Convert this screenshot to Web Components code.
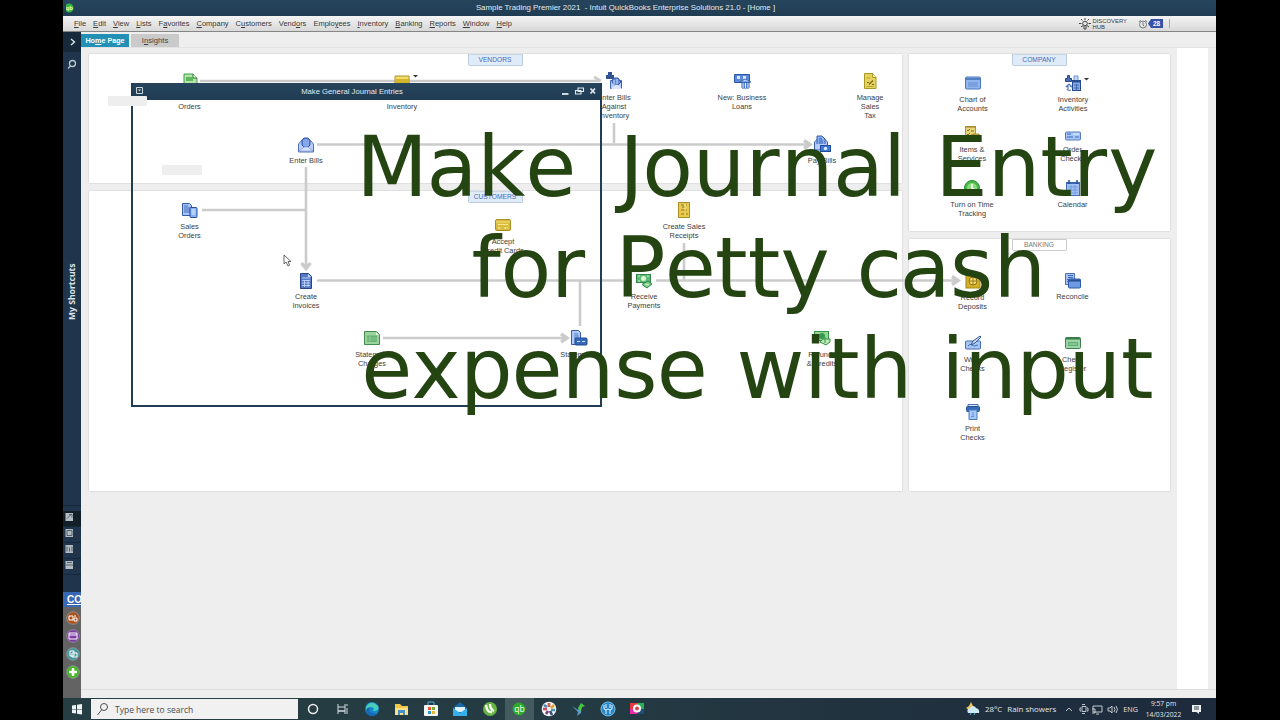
<!DOCTYPE html>
<html lang="en">
<head>
<meta charset="utf-8">
<title>QuickBooks Home</title>
<style>
  body {
    margin: 0;
    background: #000;
    font-family: "Liberation Sans", Arial, sans-serif;
    overflow: hidden;
  }
</style>
</head>
<body>
<qb-desktop></qb-desktop>

<script>
const ICONS = {
  po: '<path d="M3 3h9l4 4v10H3z" fill="#b5e5a8" stroke="#3e9d45"/><path d="M12 3v4h4" fill="#e5f8df" stroke="#2d7738"/><path d="M5 6h7v4H5z" fill="#60b75b"/>',
  box: '<path d="M2 5h14v10H2z" fill="#f2dd66" stroke="#a8932f"/><path d="M2 8h15v4H2z" fill="#d0b52d"/>',
  bills: '<path d="M1.500 8 5 4h8l3.500 4v8h-15z" fill="#b9ceff" stroke="#5270b6"/><path d="M5 9V4l2-2h4l2 2v5l-4 4z" fill="#6389d6" stroke="#3558a7"/><path d="M7 4v6M9 3v9M11 4v6" stroke="#a9c6fc"/><path d="m2 15 5-4h4l5 4z" fill="#d4e1ff" stroke="#7590cb" stroke-width=".6"/>',
  against: '<g transform="translate(1 1)"><path d="M4.500 7.500h11v8h-11z" fill="#b9ceff" stroke="#4265b1"/><path d="M6 9 7 5h5l3 4-5 5z" fill="#6389d6" stroke="#3558a7"/><path d="m5 16 4-4h3l4 4" fill="#dbe5ff"/><path d="M8 7v5M11 6v5" stroke="#d2e0ff"/></g><path d="M1 3h2V0h4v3h2v4H1z" fill="#325494"/>',
  loan: '<path d="M1.500 2.500h15v8h-15z" fill="#5a88db" stroke="#2c56a1"/><path d="M4 4h3v3H4M10 4h3v3h-3" fill="#d8e8ff"/><path d="M9 10h7v6H9z" fill="#5781d1" stroke="#2c56a1"/><path d="m7 10 5-3 6 3z" fill="#b6d0ff" stroke="#2c56a1" stroke-width=".7"/><path d="M10 11v5M12.500 11v5M15 11v5" stroke="#dce9ff"/>',
  tax: '<path d="M3.500 1.500h8l3.500 4v11H3.500z" fill="#e6d35e" stroke="#a99826"/><path d="M11.500 1.500v4H15" fill="#fff2a2" stroke="#a99826"/><path d="M5.500 6h4M5.500 14.500h7" stroke="#b7a53b"/><path d="m8 12.500 4-4m-6 2h2m3 2h2" stroke="#79671c" stroke-width="1.200"/>',
  salesorder: '<path d="M1.500 2.500h7l2 2v10h-9z" fill="#a5c5ff" stroke="#345ba8"/><path d="M3 5h4M3 7h6M3 9h6M3 11h6" stroke="#456ab4"/><rect x="9" y="6.500" width="7" height="10" rx="1" fill="#81b1ff" stroke="#294d97"/><path d="M10.500 8h4v6h-4z" fill="#b6d1ff"/>',
  invoice: '<path d="M3.500 1.500h8l3 3v12h-11z" fill="#5679c5" stroke="#25468e"/><path d="M11 2v3h3" fill="#d3e2ff"/><path d="M5 6h8M5 8.500h8M5 11h8M5 13.500h8M7.500 8v7M11 8v7" stroke="#bed5ff" stroke-width=".9"/>',
  card: '<rect x="1.500" y="3.500" width="15" height="11" rx="1.500" fill="#d8bd3c" stroke="#a99025"/><path d="M2 6h14" stroke="#f4e078"/><path d="M4 8.500h10M4 12h3M10 12h4" stroke="#fff4af" stroke-width="1.200" stroke-dasharray="2 .6"/>',
  receipt: '<path d="M3.500 1.500h11v15h-11z" fill="#e7cb4f" stroke="#aa8c22"/><path d="M6 4h3M7 6h3M6 9h6M6 13h3M11 4h1M11 13h2" stroke="#91751f"/><path d="M10 3v7" stroke="#f9e998"/>',
  money: '<rect x="1.500" y="2.500" width="14" height="8" fill="#5dba73" stroke="#2e854b"/><circle cx="8.500" cy="6.500" r="2.500" fill="#dff7d7"/><path d="M3 4h2M12 4h2M3 9h2" stroke="#d3f4d2"/><path d="M7 12.500 13 9l4 3-5 4z" fill="#7bce83" stroke="#31864c"/><path d="m10 12 4 1" stroke="#d7f5d5"/>',
  refund: '<rect x="1.500" y="2.500" width="14" height="9" fill="#94d591" stroke="#369149"/><circle cx="9" cy="7" r="3" fill="#389750"/><path d="M7 13l3-3h7v3l-4 3z" fill="#bde9b5" stroke="#348e47"/><path d="M12 8v6" stroke="#37954c"/>',
  statecharge: '<path d="M1.500 2.500h12l3 3v10h-15z" fill="#9bd39c" stroke="#418c4b"/><path d="M13 3v3h3" fill="#e5f9dc"/><path d="M4 6.500h10V13H4z" fill="#65af72"/><path d="M4 9h10M4 11h10M7 7v6" stroke="#a0d69f" stroke-width=".6"/>',
  statement: '<path d="M1.500 1.500h7l2 2v12h-9z" fill="#aecaff" stroke="#355bad"/><path d="M4 5h4M4 7h5M4 9h4" stroke="#517ac9"/><rect x="5" y="9" width="12" height="7" rx="1" fill="#3569bc" stroke="#234b91"/><path d="M7 12.500h3M12 12.500h3" stroke="#cfe0ff"/>',
  paybill: '<path d="m1.500 7 3-3h7l3 3v8h-13z" fill="#b4ccff" stroke="#375eae"/><path d="M4 9V1h5l3 3v5" fill="#88aff2" stroke="#375eae"/><path d="M6 4h3M6 6h4M6 8h4" stroke="#375eae"/><rect x="7.500" y="10.500" width="10" height="6" fill="#3e78d0" stroke="#244b96"/><circle cx="12.500" cy="13.500" r="1.700" fill="#dce9ff"/>',
  accounts: '<rect x="1.500" y="3" width="15" height="12" rx="1" fill="#91b5ed" stroke="#4c78bd"/><path d="M2 5h14" stroke="#416cb3" stroke-width="1.500"/><path d="M4 8h10v5H4z" fill="#5783ce"/><path d="M5 8v5M7 8v5M9 8v5M11 8v5M13 8v5" stroke="#c2d8ff" stroke-width=".7"/>',
  activities: '<path d="M3.500 1.500h2v3h2v3h-6v-3h2z" fill="#4d70b2" stroke="#274887"/><path d="M3 15q1 2 4 1M4 15v-3l-2 1 3-3 3 3-2-1" fill="none" stroke="#5177bd" stroke-width="1.200"/><path d="M10 6V2h4v4" fill="#c3d8ff" stroke="#6f94cd"/><rect x="8.500" y="6.500" width="8" height="10" fill="#8aabe1" stroke="#264b8d"/><path d="M8 7.500h9" stroke="#294d91" stroke-width="2"/><path d="M10 11h5M10 14h5M12.500 10v6" stroke="#3f69ae"/>',
  items: '<path d="M2.500 2.500h10v12h-10z" fill="#e6d478" stroke="#b3983a"/><path d="M2 3h11" stroke="#977c23"/><path d="m4 6 1 1 2-2M4 10l1 1 2-2M8 7h3M8 11h3" fill="none" stroke="#816d27"/><path d="M10 10h6l1 3-4 3H9z" fill="#d9b73f" stroke="#a98927"/>',
  check: '<rect x="1.500" y="5" width="15" height="8" rx="1" fill="#a7c5fa" stroke="#577dbc"/><path d="M3 7h4M3 10h6M11 10h4" stroke="#3d68b2"/><path d="M9 7h6" stroke="#e8f1ff"/>',
  clock: '<circle cx="9" cy="9" r="7.500" fill="#4ab64b" stroke="#219232"/><circle cx="9" cy="9" r="5" fill="#89da7b"/><path d="M9 5v4l3 2" fill="none" stroke="#fff" stroke-width="1.500"/>',
  calendar: '<rect x="2.500" y="3.500" width="13" height="13" fill="#a1c1f5" stroke="#416eb4"/><path d="M2 4h14" stroke="#3867b1" stroke-width="2"/><path d="M5 1v4M13 1v4" stroke="#274f95" stroke-width="1.500"/><path d="M4 8h10M4 11h10M4 14h10M7 6v9M11 6v9" stroke="#6a94da" stroke-width=".8"/>',
  safe: '<rect x="2" y="2" width="14" height="14" fill="#d2b129" stroke="#a88413"/><circle cx="9" cy="9" r="4" fill="#f4db70" stroke="#8f7215"/><path d="M9 5v8M5 9h8" stroke="#9c7b17"/>',
  reconcile: '<path d="M1.500 1.500h9v11h-9z" fill="#a6c3f4" stroke="#4870b5"/><path d="M4 3.500h5M4 5.500h5M3 7.500h2M3 9.500h2" stroke="#3f69b0"/><rect x="4.500" y="7" width="12" height="9" rx="1" fill="#6d9ae2" stroke="#305aa7"/><path d="M5 8.500h11" stroke="#284d91" stroke-width="2"/>',
  write: '<rect x="1.500" y="7" width="15" height="8" rx="1" fill="#a7c6f9" stroke="#446db0"/><path d="M4 12q2-3 4-1t6 0" fill="none" stroke="#4670b8"/><path d="m7 11 2-4 7-5 1 1-6 6z" fill="#cbddff" stroke="#335993"/>',
  register: '<rect x="1.500" y="3.500" width="15" height="11" rx="1" fill="#9bd4a6" stroke="#3e8151"/><path d="M2 4.500h14" stroke="#397c4a" stroke-width="2"/><path d="M4 8h10v4H4z" fill="#66ae77"/><path d="M5 10h8" stroke="#a8dfb0"/>',
  printer: '<path d="M4 1.500h10V4H4z" fill="#dae7ff" stroke="#4872b4"/><rect x="2.500" y="3.500" width="13" height="5" rx="1" fill="#356cb9" stroke="#295292"/><path d="M5 7h8v9.500H5z" fill="#a5c8fd" stroke="#4d7bbb"/><path d="M9 9v5M7 13.500h3" stroke="#6691d5"/>'
};

// Small helper so that every element gets an open shadow root
class QbElement extends HTMLElement {
  constructor() {
    super();
    this.attachShadow({ mode: 'open' });
  }
  connectedCallback() {
    this.shadowRoot.innerHTML = this.render();
  }
  attr(name, fallback = '') {
    return this.getAttribute(name) || fallback;
  }
}

class QbControls extends QbElement {
  render() {
    return `
      <style>
        :host { display: block; width: 36px; height: 10px; }
        svg { display: block; }
      </style>
      <svg width="36" height="10" fill="none" stroke="#dfe8ee">
        <path d="M0 8h6.500" stroke-width="1.800"/>
        <path d="M16 2h5.500v3.500H16zM13.500 4.500H19V8h-5.500z" stroke-width="1.100"/>
        <path d="m28.500 2.500 4.500 5M33 2.500l-4.500 5" stroke-width="1.700"/>
      </svg>`;
  }
}
customElements.define('qb-controls', QbControls);

class QbTitlebar extends QbElement {
  render() {
    return `
      <style>
        :host {
          display: grid;
          grid-template-columns: 40px 1fr 40px;
          align-items: center;
          height: 16px;
          box-sizing: border-box;
          padding: 0 1px 1px 3px;
          background: linear-gradient(#26455d, #203c53);
          color: #e2eaf0;
          font-size: 7.870px;
          white-space: pre;
        }
        .title { text-align: center; padding-right: 30px; }
        svg { display: block; }
      </style>
      <svg width="10" height="10"><circle cx="3" cy="5" r="4.500" fill="#38b83e"/><text x="-.5" y="7" font-size="6" font-weight="bold" fill="#dfffdc">qb</text></svg>
      <div class="title"><slot></slot></div>
      <qb-controls></qb-controls>`;
  }
}
customElements.define('qb-titlebar', QbTitlebar);

class QbMenubar extends QbElement {
  render() {
    const items = ['_File', '_Edit', '_View', '_Lists', 'F_avorites', '_Company', 'C_ustomers', 'Vend_ors', 'Emplo_yees', '_Inventory', '_Banking', '_Reports', '_Window', '_Help'];
    return `
      <style>
        :host {
          display: flex;
          justify-content: space-between;
          height: 16px;
          box-sizing: border-box;
          padding-left: 11px;
          background: linear-gradient(#f4f4f4, #d8d8d8);
          border-bottom: 1.500px solid #858585;
          font-size: 7.500px;
          color: #3b3b3b;
        }
        nav, .tools { display: flex; align-items: center; }
        nav { gap: 7px; }
        u { text-underline-offset: 1px; text-decoration-thickness: 1px; }
        .tools { padding-right: 46px; }
        .hub { font-size: 5.900px; line-height: 6px; margin: 0 11px 0 1px; }
        .count {
          width: 15px;
          height: 9px;
          color: #fff;
          background: #3552a8;
          clip-path: polygon(20% 0, 100% 0, 100% 100%, 20% 100%, 0 50%);
          font: bold 6.500px/9px "Liberation Sans";
          text-align: center;
          text-indent: 2px;
        }
        .end { border-left: 1px solid #aaa; height: 9px; margin-left: 6px; }
      </style>
      <nav>${items.map(i => `<span>${i.replace(/_(.)/, '<u>$1</u>')}</span>`).join('')}</nav>
      <div class="tools">
        <svg width="12" height="14" fill="none" stroke="#444"><circle cx="6" cy="6.500" r="2.300"/><path d="M5 9v3h2V9M6 1v2M0 6.500h2.500M9.500 6.500H12M2 2l1.500 1.500M10 2 8.500 3.500M2 10l2-1.500M10 10 8 8.500"/></svg>
        <div class="hub">DISCOVERY<br>HUB</div>
        <svg width="10" height="12" fill="none" stroke="#6f7478" stroke-width=".9"><circle cx="5" cy="6.500" r="3.500"/><path d="M5 4v3l1 1M.8 4l2-2M9.200 4l-2-2"/></svg>
        <div class="count">28</div><div class="end"></div>
      </div>`;
  }
}
customElements.define('qb-menubar', QbMenubar);

class QbShortcuts extends QbElement {
  render() {
    const glyphs = ['M2 6l4-4M4 2h3v3', 'M2 2h5v5H2z', 'M2 2v5M4.500 3v4M7 2v5', 'M1 4.500h7M2 2h5'];
    const dots = [
      ['#aa5420', '<path d="M3 5h4v4H3zM9 4v2M8 7h3v3H8z"/>'],
      ['#7e3ba6', '<path d="M3 4h8v6H3zM3 6h8"/>'],
      ['#4798a0', '<path d="M4 4h4v5H4zM6 6h5v4H6z"/>'],
      ['#47b528', '<path d="M7 3v8M3 7h8" stroke-width="2.500"/>']
    ];
    return `
      <style>
        :host { display: flex; flex-direction: column; width: 18px; background: #20354b; color: #d9e3eb; }
        svg { display: block; }
        .toggle { height: 20px; background: #172a3b; }
        .search { height: 23px; }
        .label { flex: 1; display: flex; justify-content: center; padding-top: 185px; }
        .label span { writing-mode: vertical-rl; transform: rotate(180deg); font: bold 8.600px/12px "Noto Sans", sans-serif; height: 60px; white-space: nowrap; }
        .tool { height: 15px; border-bottom: 1px solid #15283a; }
        .tool:first-of-type { background: #121f29; }
        .tools { padding: 5px 0 17px; border-top: 1px solid #142738; }
        .co { height: 15px; overflow: hidden; background: #3867b3; color: #fff; font: bold 10px/15px "Liberation Sans"; text-decoration: underline; text-indent: 4px; }
        .dots { display: flex; flex-direction: column; gap: 4px; height: 87px; padding: 4px 0 0 3px; background: #636363; }
      </style>
      <div class="toggle"><svg width="18" height="20" fill="none" stroke="#dce5ec" stroke-width="1.400"><path d="m8 7 3.500 3L8 13"/></svg></div>
      <div class="search"><svg width="18" height="23" fill="none" stroke="#bbcad6" stroke-width="1.300"><circle cx="9.500" cy="11.500" r="3"/><path d="M7.500 14 5 16.500"/></svg></div>
      <div class="label"><span>My Shortcuts</span></div>
      <div class="tools">${glyphs.map(d => `<div class="tool"><svg width="18" height="14" fill="none" stroke="#53616b"><path d="M2.500 2H10v8H2.500z" fill="#b3bcc3" stroke="none"/><path transform="translate(2 1.500)" d="${d}"/></svg></div>`).join('')}</div>
      <div class="co">CO</div>
      <div class="dots">${dots.map(([c, g]) => `<svg width="14" height="14" viewBox="0 0 14 14" fill="none" stroke="#fff"><circle cx="7" cy="7" r="6.300" fill="${c}" stroke="#a7a7a7" stroke-width=".6"/>${g}</svg>`).join('')}</div>`;
  }
}
customElements.define('qb-shortcuts', QbShortcuts);

class QbPanel extends QbElement {
  render() {
    return `
      <style>
        :host { display: flex; justify-content: center; align-items: flex-start; background: #fff; box-shadow: 0 0 1.500px #bbb; }
        span {
          box-sizing: border-box;
          width: 55px;
          height: 12px;
          border: 1px solid #bccde2;
          border-top-color: #cbd8e7;
          border-radius: 0 0 2px 2px;
          background: #e0ebf8;
          color: #476bb8;
          font-size: 6.700px;
          line-height: 10px;
          text-align: center;
          margin-right: 1px;
        }
        :host([plain]) span { background: #fff; border-color: #ccc; color: #777; }
      </style>
      <span>${this.attr('heading')}</span>`;
  }
}
customElements.define('qb-panel', QbPanel);

class QbHome extends QbElement {
  render() {
    return `
      <style>
        :host { display: flex; flex-direction: column; flex: 1; background: #eee; }
        .tabs { display: flex; gap: 2px; height: 16px; padding: 2px 0 0 0; box-sizing: border-box; border-bottom: 1px solid #e2e2e2; font-size: 7.700px; line-height: 13px; text-align: center; }
        .tabs div { height: 13px; width: 48px; background: #cacaca; color: #444; }
        .tabs .active { background: #2290b4; color: #fff; font: bold 7.200px/13px "Liberation Sans"; }
        .body { display: flex; flex: 1; justify-content: space-between; padding-right: 8px; }
        .panels { display: grid; grid-template-columns: 813px 261px; gap: 7px; padding: 6px 0 0 8px; align-items: start; }
        .column { display: grid; gap: 8px; }
        .left { grid-template-rows: 128.500px 300.500px; }
        .right { grid-template-rows: 176.500px 252.500px; }
        .blank { width: 31px; background: #fff; }
        .status { height: 8px; border-top: 1px solid #dedede; background: #eee; }
      </style>
      <div class="tabs"><div class="active">Ho<u>m</u>e Page</div><div>I<u>n</u>sights</div></div>
      <div class="body">
        <div class="panels">
          <div class="column left"><qb-panel heading="VENDORS"></qb-panel><qb-panel heading="CUSTOMERS"></qb-panel></div>
          <div class="column right"><qb-panel heading="COMPANY"></qb-panel><qb-panel heading="BANKING" plain></qb-panel></div>
        </div>
        <div class="blank"></div>
      </div>
      <div class="status"></div>`;
  }
}
customElements.define('qb-home', QbHome);

// x and y are the centre of the icon, label is the centre of the first line
class QbNode extends QbElement {
  render() {
    const x = +this.attr('x'), y = +this.attr('y'), label = +this.attr('label');
    const icon = this.attr('icon');
    return `
      <style>
        :host { display: block; position: absolute; left: ${x - 30}px; top: ${y - 9}px; width: 60px; text-align: center; color: #3d3d3d; font-size: 7.400px; line-height: 9px; }
        svg { display: block; margin: 0 auto; overflow: visible; }
        div { margin-top: ${label - y - 13.5}px; white-space: pre-line; }
      </style>
      <svg width="18" height="18" viewBox="0 0 18 18">${ICONS[icon] || ''}${this.hasAttribute('more') ? '<path d="M20 4h5l-2.500 2.500z" fill="#333"/>' : ''}</svg>
      <div><slot></slot></div>`;
  }
}
customElements.define('qb-node', QbNode);

class QbFlow extends QbElement {
  render() {
    const nodes = [
      [189.5, 80, 106, 'po', 'Orders'],
      [402, 80, 106, 'box', 'Inventory', 1],
      [614, 81, 97.500, 'against', 'Enter Bills\nAgainst\nInventory'],
      [742, 81, 97.500, 'loan', 'New: Business\nLoans'],
      [870, 81, 97.500, 'tax', 'Manage\nSales\nTax'],
      [306, 144.5, 160.500, 'bills', 'Enter Bills'],
      [822, 144, 160.500, 'paybill', 'Pay Bills'],
      [189.5, 210, 226, 'salesorder', 'Sales\nOrders'],
      [503, 225, 241, 'card', 'Accept\nCredit Cards'],
      [684, 210, 226, 'receipt', 'Create Sales\nReceipts'],
      [306, 280.5, 296.500, 'invoice', 'Create\nInvoices'],
      [644, 280.5, 296.500, 'money', 'Receive\nPayments'],
      [372, 338, 354, 'statecharge', 'Statement\nCharges'],
      [579, 338, 354, 'statement', 'Statements'],
      [822, 338, 354, 'refund', 'Refunds\n& Credits'],
      [972.5, 83, 99.500, 'accounts', 'Chart of\nAccounts'],
      [1073, 83, 99.500, 'activities', 'Inventory\nActivities', 1],
      [972, 132.5, 149.500, 'items', 'Items &\nServices'],
      [1072.5, 135.5, 149.500, 'check', 'Order\nChecks'],
      [972, 188, 204.500, 'clock', 'Turn on Time\nTracking'],
      [1072.5, 188, 204.500, 'calendar', 'Calendar'],
      [972.5, 280.5, 297, 'safe', 'Record\nDeposits'],
      [1072.5, 280.5, 296.500, 'reconcile', 'Reconcile'],
      [972.5, 343, 359.500, 'write', 'Write\nChecks'],
      [1072.5, 343, 359.500, 'register', 'Check\nRegister'],
      [972.5, 412, 428, 'printer', 'Print\nChecks']
    ];
    return `
      <style>
        :host { position: absolute; inset: 0; }
        .lines { display: block; }
      </style>
      <svg class="lines" width="1280" height="500" fill="none" stroke="#cbcbcb" stroke-width="2.600">
        <path d="M200 81h400m-6-4 7 4M614 123v20M317 144.500h493M306 167v101M202 210h104M317 280.500h315M656 280.500h302M684 243v37M580 281v45M383 338h184"/>
        <path stroke-width="3.400" d="m804 140.500 6 4-6 4M301.500 263l4.500 5.500 4.500-5.500M952 276.500l6 4-6 4M561 334l6 4-6 4"/>
      </svg>
      ${nodes.map(([x, y, l, icon, text, more]) => `<qb-node x="${x}" y="${y}" label="${l}" icon="${icon}" ${more ? 'more' : ''}>${text.replace('&', '&amp;')}</qb-node>`).join('')}`;
  }
}
customElements.define('qb-flow', QbFlow);

class QbJournal extends QbElement {
  render() {
    return `
      <style>
        :host { position: absolute; left: 131px; top: 83px; width: 471px; height: 324px; box-sizing: border-box; border: 2px solid #203d55; border-top: 0; }
        header { display: grid; grid-template-columns: 38px 1fr 38px; align-items: center; height: 16.500px; background: linear-gradient(#26455d, #203c53); color: #e2eaf0; font-size: 7.700px; text-align: center; }
        header span { padding-right: 29px; }
        main { display: flex; justify-content: flex-end; }
        .edge { width: 4px; height: 22px; background: #fff; }
      </style>
      <header>
        <svg width="12" height="12" fill="none" stroke="#cbd7df"><path d="M3.500 2.500h6v6h-6z"/><path d="M5 4.500h3L6.500 6.500z" fill="#cbd7df" stroke="none"/></svg>
        <span><slot></slot></span>
        <qb-controls></qb-controls>
      </header>
      <main><div class="edge"></div></main>`;
  }
}
customElements.define('qb-journal', QbJournal);

// Advance and left shift of each letter, in thousandths of the font size
const LETTERS = {
  M: [843, -10], a: [601, -6], k: [592, 6], e: [596, -9], J: [455, 176], o: [607, -2], u: [633, 0],
  r: [427, 0], n: [633, 0], l: [274, -2], E: [632, 0], t: [394, 0], y: [592, 0], f: [352, 0],
  P: [603, 0], c: [521, -6], s: [521, 0], h: [633, 0], x: [592, 0], p: [623, -6], w: [818, 0], i: [274, -2]
};

class QbCaption extends QbElement {
  place(x, word) {
    return [...word].map(ch => {
      const [advance, shift] = LETTERS[ch];
      const at = x + shift * 0.083;
      x += advance * 0.083;
      return at.toFixed(1);
    }).join(' ');
  }
  render() {
    const words = [
      [357, 196, 'Make'], [604.7, 196, 'Journal'], [935.2, 196, 'Entry'],
      [471.5, 297, 'for'], [615.5, 297, 'Petty'], [857, 297, 'cash'],
      [362, 397.7, 'expense'], [736.4, 397.7, 'with'], [941.5, 397.7, 'input']
    ];
    return `
      <style>
        :host { position: absolute; inset: 0; }
        text { font: 83px "DejaVu Sans", sans-serif; fill: #244412; }
      </style>
      <svg width="1280" height="500">${words.map(([x, y, w]) => `<text x="${this.place(x, w)}" y="${y}">${w}</text>`).join('')}</svg>`;
  }
}
customElements.define('qb-caption', QbCaption);

class QbTaskbar extends QbElement {
  render() {
    const apps = [
      '<circle cx="9" cy="9" r="4.500" fill="none" stroke="#eee" stroke-width="1.500"/>',
      '<path d="M5 4v3h7V4M5 14v-3h7v3M5 7v4h7V7M14 4v2M14 8v6" fill="none" stroke="#d3dce0"/>',
      '<circle cx="9" cy="9" r="7" fill="#1685cc"/><path d="M3 7Q8-1 15 6q2 5-5 5 2-4-2-4-4 0-5 4z" fill="#48cfba"/><path d="M7 8q-3 5 7 6-7 5-11-2 0-5 4-4z" fill="#1769b6"/>',
      '<path d="M3 4h5l2 2h6v9H3z" fill="#f2c84d"/><path d="M3 8h13v7H3z" fill="#ffe083"/><path d="M6 10h7v5h-2v-2H8v2H6z" fill="#4492ce"/>',
      '<rect x="2" y="5" width="14" height="11" rx="1" fill="#f4f6f7"/><path d="M6 5V2h6v3" fill="none" stroke="#54acdc"/><path d="M6 7h3v3H6z" fill="#ee5535"/><path d="M10 7h3v3h-3z" fill="#70ad36"/><path d="M6 11h3v3H6z" fill="#2a94d5"/><path d="M10 11h3v3h-3z" fill="#ecb62d"/>',
      '<path d="m2 8 7-6 7 6v8H2z" fill="#1669ad"/><path d="M4 7h10v5H4z" fill="#dff2fc"/><path d="m2 8 7 5 7-5v8H2z" fill="#36b0eb"/>',
      '<circle cx="9" cy="9" r="7" fill="#67b644"/><path d="M5 5q1 8 6 7M9 4q0 5 4 7" fill="none" stroke="#fff" stroke-width="2.300"/>',
      '<circle cx="9" cy="9" r="6.500" fill="#2caa2c"/><text x="4.300" y="11.500" font-size="8.500" fill="#fff">qb</text>',
      '<circle cx="9" cy="9" r="7.300" fill="#f4f5f4"/><g stroke-width="2.600"><path d="M9 3v4" stroke="#d65d46"/><path d="m14 5-3 3" stroke="#e4a135"/><path d="M15 10h-4" stroke="#4d97bc"/><path d="m12 15-2-4" stroke="#3b4f83"/><path d="m6 14 2-3" stroke="#7b3c7f"/><path d="M3 9h4" stroke="#cf4c63"/><path d="m4 5 3 2" stroke="#4a87b0"/></g>',
      '<path d="m3 6 6 4 4-6-1 9-4 3 1-4z" fill="#5b9ac7"/><path d="m9 8 3-5 4 3-3 1-2 5z" fill="#42c93c"/>',
      '<circle cx="9" cy="9" r="7" fill="#2486c7" stroke="#79c5ed"/><path d="M5 5v3q0 3 4 1 4 2 4-1V5M7 4v4M11 4v4M7 10v4M11 10v4" fill="none" stroke="#e8f7ff"/>',
      '<path d="M2 3h7v6H2z" fill="#e7383f"/><path d="M9 3h7v6H9z" fill="#29af55"/><path d="M2 9h7v5H2z" fill="#e929a5"/><path d="M9 9h7v5H9z" fill="#214b78"/><circle cx="9" cy="8.500" r="4" fill="#fff"/><circle cx="9" cy="8.500" r="2" fill="#d9434b"/>'
    ];
    return `
      <style>
        :host { display: flex; justify-content: space-between; height: 22px; background: linear-gradient(90deg, #263d43 0, #243b43 45%, #20303e 75%, #1d2b3d); color: #e2e6e9; font: 7.900px "Open Sans", sans-serif; }
        div { display: flex; align-items: center; }
        svg { display: block; }
        .start { width: 28px; justify-content: center; }
        .search { width: 207px; background: #f1f1f1; color: #4c4c4c; gap: 4px; font-size: 8.500px; }
        .app { width: 29.500px; height: 22px; justify-content: center; }
        .open { background: #435a5f; }
        .tray { padding-right: 14px; }
        .temp { margin-left: 5px; gap: 5px; }
        .sys { margin: 0 4px 0 9px; }
        .lang { font-size: 7.200px; margin-right: 3px; }
        .time { flex-direction: column; width: 45px; font-size: 6.700px; line-height: 11px; margin-right: 5px; }
      </style>
      <div>
        <div class="start"><svg width="12" height="12" fill="#eef4f5"><path d="m1 2.500 4-.6v4H1zM6 1.700l5-.8v5H6zM1 6.500h4v4L1 10zM6 6.500h5v5l-5-.8z"/></svg></div>
        <div class="search"><svg width="20" height="20" fill="none" stroke="#4d4d4d"><circle cx="13" cy="8" r="3.500"/><path d="m10.500 11-4 5"/></svg>Type here to search</div>
        ${apps.map((a, i) => `<div class="app${i == 7 ? ' open' : ''}"><svg width="18" height="18">${a}</svg></div>`).join('')}
      </div>
      <div class="tray">
        <svg width="14" height="16"><path d="m5 1 2 4 3 2-5 3-5-3 3-2z" fill="#edc452"/><path d="M2 12Q0 8 4 7q3-4 6 0 4 1 3 5z" fill="#cbe9f6"/><path d="m5 12-1 2M9 12l-1 2" stroke="#59a9d0"/></svg>
        <div class="temp"><span>28°C</span><span>Rain showers</span></div>
        <svg class="sys" width="54" height="14" fill="none" stroke="#d2d9dd" stroke-width=".9"><path d="m1 9 3-3 3 3M17 4.500h4v5h-4zM16 6h-1v3h1M22 6h1v3h-1M17 2.500h3M17 11.500h3M28 4h9v6h-9zM31 12h3M27 7h3v4h-3M43 6v3h2l2 2V4l-2 2zM49 5q2 2.500 0 5M51 4q3 3.500 0 7"/></svg>
        <span class="lang">ENG</span>
        <div class="time"><span>9:57 pm</span><span>14/03/2022</span></div>
        <svg width="11" height="12"><path d="M1 2h9v7H8v2L5.500 9H1z" fill="#edf1f2"/><path d="M3 4h5M3 6h5" stroke="#334350"/></svg>
      </div>`;
  }
}
customElements.define('qb-taskbar', QbTaskbar);

class QbDesktop extends QbElement {
  render() {
    return `
      <style>
        :host { display: block; width: 1280px; height: 720px; position: relative; overflow: hidden; }
        .screen { display: flex; flex-direction: column; width: 1153px; height: 720px; margin: 0 auto 0 63px; }
        .work { display: flex; flex: 1; min-height: 0; }
        .smudge { position: absolute; height: 10px; background: #eee; border-radius: 1px; }
        .cursor { position: absolute; left: 283px; top: 254px; }
      </style>
      <div class="screen">
        <qb-titlebar>Sample Trading Premier 2021  - Intuit QuickBooks Enterprise Solutions 21.0 - [Home ]</qb-titlebar>
        <qb-menubar></qb-menubar>
        <div class="work"><qb-shortcuts></qb-shortcuts><qb-home></qb-home></div>
        <qb-taskbar></qb-taskbar>
      </div>
      <qb-flow></qb-flow>
      <qb-journal>Make General Journal Entries</qb-journal>
      <div class="smudge" style="left:107.5px;top:96px;width:39px"></div>
      <div class="smudge" style="left:162px;top:164.5px;width:40px"></div>
      <svg class="cursor" width="9" height="13"><path d="M1 1v9l2-2 2 4 1.500-.7L5 7.500h3z" fill="#fff" stroke="#555" stroke-width=".9"/></svg>
      <qb-caption></qb-caption>`;
  }
}
customElements.define('qb-desktop', QbDesktop);
</script>
</body>
</html>
